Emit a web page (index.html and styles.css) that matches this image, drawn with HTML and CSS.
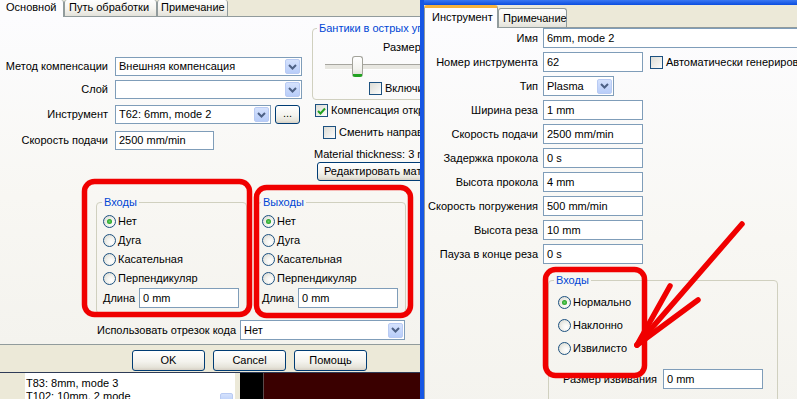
FILE: index.html
```html
<!DOCTYPE html>
<html lang="ru">
<head>
<meta charset="utf-8">
<title>Параметры</title>
<link rel="stylesheet" href="styles.css">
</head>
<body>
<div class="desk">
  <div class="win win-l">
    <div class="dlg">
      <div class="tabs tabs-l">
        <div class="tab tab-sel tl1">Основной</div>
        <div class="tab tl2">Путь обработки</div>
        <div class="tab tl3">Примечание</div>
      </div>
      <div class="panel panel-l">
        <div class="top">
          <div class="form">
            <div class="frow">
              <span class="lbl">Метод компенсации</span>
              <div class="combo w187"><span class="val">Внешняя компенсация</span><span class="dd"><svg width="9" height="6" viewBox="0 0 9 6"><path d="M1 1 L4.5 4.5 L8 1" fill="none" stroke="#4d6185" stroke-width="2"/></svg></span></div>
            </div>
            <div class="frow fr2">
              <span class="lbl">Слой</span>
              <div class="combo w187"><span class="val"></span><span class="dd"><svg width="9" height="6" viewBox="0 0 9 6"><path d="M1 1 L4.5 4.5 L8 1" fill="none" stroke="#4d6185" stroke-width="2"/></svg></span></div>
            </div>
            <div class="frow fr3">
              <span class="lbl">Инструмент</span>
              <div class="combo w156"><span class="val">T62: 6mm, mode 2</span><span class="dd"><svg width="9" height="6" viewBox="0 0 9 6"><path d="M1 1 L4.5 4.5 L8 1" fill="none" stroke="#4d6185" stroke-width="2"/></svg></span></div>
              <div class="btn btn-dots">...</div>
            </div>
            <div class="frow fr4">
              <span class="lbl">Скорость подачи</span>
              <div class="inp w99">2500 mm/min</div>
            </div>
          </div>
          <div class="side">
            <fieldset class="gb gb-bow">
              <legend>Бантики в острых углах</legend>
              <div class="razmer">Размер</div>
              <div class="slider"><div class="thumb"></div></div>
              <div class="ckrow ck-in"><span class="ck"></span>Включить</div>
            </fieldset>
            <div class="ckrow ck1"><span class="ck on"><svg width="9" height="8" viewBox="0 0 9 8"><path d="M1 4 L3.5 6.5 L8 1.5" fill="none" stroke="#21a121" stroke-width="2"/></svg></span>Компенсация открытых контуров</div>
            <div class="ckrow ck2"><span class="ck"></span>Сменить направление</div>
            <div class="mat">Material thickness: 3 mm</div>
            <div class="btn btn-mat">Редактировать материал</div>
          </div>
        </div>
        <div class="groups">
          <fieldset class="gb g1">
            <legend>Входы</legend>
            <div class="radrow r-first"><span class="radio on"></span>Нет</div>
            <div class="radrow"><span class="radio"></span>Дуга</div>
            <div class="radrow"><span class="radio"></span>Касательная</div>
            <div class="radrow"><span class="radio"></span>Перпендикуляр</div>
            <div class="lenrow"><span class="lenlbl">Длина</span><div class="inp w100">0 mm</div></div>
          </fieldset>
          <fieldset class="gb g2">
            <legend>Выходы</legend>
            <div class="radrow r-first"><span class="radio on"></span>Нет</div>
            <div class="radrow"><span class="radio"></span>Дуга</div>
            <div class="radrow"><span class="radio"></span>Касательная</div>
            <div class="radrow"><span class="radio"></span>Перпендикуляр</div>
            <div class="lenrow"><span class="lenlbl">Длина</span><div class="inp w100">0 mm</div></div>
          </fieldset>
        </div>
        <div class="userow">
          <span class="uselbl">Использовать отрезок кода</span>
          <div class="combo w165"><span class="val">Нет</span><span class="dd"><svg width="9" height="6" viewBox="0 0 9 6"><path d="M1 1 L4.5 4.5 L8 1" fill="none" stroke="#4d6185" stroke-width="2"/></svg></span></div>
        </div>
      </div>
      <div class="btnbar">
        <div class="btn btn-w">OK</div>
        <div class="btn btn-w">Cancel</div>
        <div class="btn btn-w">Помощь</div>
      </div>
    </div>
    <div class="app">
      <div class="app-side"></div>
      <div class="list">
        <div class="list-items">
          <div>T83: 8mm, mode 3</div>
          <div>T102: 10mm, 2 mode</div>
        </div>
        <div class="list-scroll"><span class="sbtn"></span></div>
      </div>
      <div class="app-gap"></div>
      <div class="app-black"></div>
      <div class="app-dark"></div>
    </div>
  </div>

  <div class="win win-r">
    <div class="title"></div>
    <div class="tabs tabs-r">
      <div class="tab tab-sel tr1">Инструмент</div>
      <div class="tab tr2">Примечание</div>
    </div>
    <div class="panel panel-r">
      <div class="fgrid">
        <span class="glbl">Имя</span><div class="inp wname">6mm, mode 2</div>
        <span class="glbl">Номер инструмента</span>
        <div class="cell-flex"><div class="inp w100">62</div><div class="ckrow ck-auto"><span class="ck"></span>Автоматически генерировать</div></div>
        <span class="glbl">Тип</span>
        <div class="combo w71"><span class="val">Plasma</span><span class="dd"><svg width="9" height="6" viewBox="0 0 9 6"><path d="M1 1 L4.5 4.5 L8 1" fill="none" stroke="#4d6185" stroke-width="2"/></svg></span></div>
        <span class="glbl">Ширина реза</span><div class="inp w100">1 mm</div>
        <span class="glbl">Скорость подачи</span><div class="inp w100">2500 mm/min</div>
        <span class="glbl">Задержка прокола</span><div class="inp w100">0 s</div>
        <span class="glbl">Высота прокола</span><div class="inp w100">4 mm</div>
        <span class="glbl">Скорость погружения</span><div class="inp w100">500 mm/min</div>
        <span class="glbl">Высота реза</span><div class="inp w100">10 mm</div>
        <span class="glbl">Пауза в конце реза</span><div class="inp w100">0 s</div>
      </div>
      <fieldset class="gb gb-r">
        <legend>Входы</legend>
        <div class="radrow2 r2-first"><span class="radio on"></span>Нормально</div>
        <div class="radrow2"><span class="radio"></span>Наклонно</div>
        <div class="radrow2"><span class="radio"></span>Извилисто</div>
        <div class="wavrow"><span class="wavlbl">Размер извивания</span><div class="inp w100">0 mm</div></div>
      </fieldset>
    </div>
  </div>

  <svg class="marks" width="797" height="399" viewBox="0 0 797 399">
    <g fill="none" stroke="#f00000" stroke-width="5.5" stroke-linecap="round" stroke-linejoin="round">
      <rect x="84.5" y="181.5" width="165" height="133" rx="10"/>
      <rect x="256.5" y="187.5" width="154" height="128" rx="10"/>
      <rect x="545.5" y="269.5" width="99" height="106" rx="10"/>
      <path d="M742 224 L637 345"/>
      <path d="M670 286 L637 345"/>
      <path d="M698 300 L637 345"/>
    </g>
  </svg>
</div>
</body>
</html>
```

FILE: styles.css
```css
* { box-sizing: border-box; }
html, body { margin: 0; padding: 0; }
body {
  font-family: "Liberation Sans", Arial, sans-serif;
  font-size: 11px;
  line-height: 13px;
  color: #000;
  background: #ece9d8;
}
.desk { position: relative; width: 797px; height: 399px; overflow: hidden; background: #ece9d8; }
.win { position: absolute; top: 0; overflow: hidden; }

/* ---------- left window ---------- */
.win-l { left: 0; width: 420px; height: 399px; display: flex; flex-direction: column; }
.dlg { height: 372px; flex: none; display: flex; flex-direction: column; background: #ece9d8; }

.tabs { display: flex; align-items: flex-end; flex: none; }
.tabs-l { height: 16px; }
.tab {
  border: 1px solid #919b9c; border-bottom: none;
  border-radius: 3px 3px 0 0;
  background: linear-gradient(#fefefe, #f5f4ef 55%, #e3e2da);
  white-space: nowrap;
}
.tab-sel { background: #fcfcfe; position: relative; z-index: 1; margin-bottom: -1px; }
.tl1 { width: 64px; height: 17px; padding: 1px 0 0 6px; border-top: none; border-left: none; border-radius: 0 3px 0 0; }
.tl2 { width: 93px; height: 16px; padding: 1px 0 0 4px; border-top: none; }
.tl3 { width: 71px; height: 16px; padding: 1px 0 0 3px; border-top: none; }

.panel { border: 1px solid #919b9c; background: linear-gradient(#fcfcfe, #f8f7f3 55%, #f4f3ee); }
.panel-l { height: 329px; flex: none; border-left: none; border-right: none; display: flex; flex-direction: column; }

.top { display: flex; height: 179px; flex: none; }
.form { width: 305px; flex: none; padding-top: 40px; }
.frow { display: flex; align-items: center; height: 19px; }
.fr2 { margin-top: 4px; }
.fr3 { margin-top: 6px; }
.fr4 { margin-top: 7px; height: 19px; }
.lbl { width: 108px; flex: none; text-align: right; margin-right: 7px; white-space: nowrap; }

.combo {
  height: 19px; border: 1px solid #7f9db9; background: #fff;
  display: flex; align-items: center; padding-left: 3px; flex: none;
}
.combo .val { flex: 1; white-space: nowrap; overflow: hidden; }
.dd {
  width: 15px; height: 15px; margin-right: 1px; flex: none;
  border: 1px solid #b9cbf3; border-radius: 2px;
  background: linear-gradient(#d5e2fd, #b8cdf9);
  display: flex; align-items: center; justify-content: center;
}
.w187 { width: 187px; }
.w156 { width: 156px; }
.w165 { width: 165px; height: 20px; }
.w71 { width: 71px; height: 20px; }

.inp {
  height: 19px; border: 1px solid #7f9db9; background: #fff;
  display: flex; align-items: center; padding-left: 3px; flex: none; white-space: nowrap;
}
.w99 { width: 99px; }
.w100 { width: 100px; height: 20px; }
.wname { width: 260px; height: 20px; }

.btn {
  border: 1px solid #003c74; border-radius: 3px;
  background: linear-gradient(#ffffff, #f4f3ee 55%, #e6e4da 85%, #d6d0c5);
  display: flex; align-items: center; justify-content: center; white-space: nowrap; flex: none;
}
.btn-dots { width: 25px; height: 19px; margin-left: 4px; padding-bottom: 2px; }

.side { flex: 1; min-width: 0; padding-left: 7px; white-space: nowrap; overflow: hidden; }
.gb { margin: 0; padding: 0; border: 1px solid #d0d0bf; border-radius: 4px; min-width: 0; }
.gb legend { padding: 0 2px; margin-left: 4px; color: #0046d5; line-height: 12px; }
.gb-bow { margin-top: 5px; height: 78px; width: 140px; }
.razmer { padding-left: 70px; margin-top: 7px; }
.slider { position: relative; height: 21px; margin-top: 2px; }
.slider::before {
  content: ""; position: absolute; left: 12px; right: 0; top: 8px; height: 4px;
  border-top: 1px solid #a7a6a0; border-bottom: 1px solid #fff; background: #e8e7e1;
}
.thumb {
  position: relative; margin-left: 39px; width: 11px; height: 21px;
  border: 1px solid #a3a39a; border-radius: 3px;
  background: linear-gradient(#fff, #f3f3ef 70%, #e2e1da);
  border-bottom: 3px solid #21a121;
}
.ckrow { display: flex; align-items: center; height: 13px; white-space: nowrap; }
.ck {
  width: 13px; height: 13px; flex: none; margin-right: 3px;
  border: 1px solid #1c5180;
  background: linear-gradient(135deg, #dcdcd5, #fcfcfb);
  display: flex; align-items: center; justify-content: center;
}
.ck-in { margin-top: 5px; margin-left: 56px; }
.ck1 { margin-top: 4px; margin-left: 3px; }
.ck2 { margin-top: 9px; margin-left: 11px; }
.mat { margin-top: 9px; margin-left: 2px; }
.btn-mat { width: 130px; height: 19px; margin-top: 1px; margin-left: 5px; justify-content: flex-start; padding-left: 6px; }

.groups { display: flex; padding-left: 96px; height: 118px; flex: none; }
.g1 { width: 151px; height: 118px; padding-left: 6px; }
.g1 legend { margin-left: -1px; }
.g2 { width: 149px; height: 118px; margin-left: 10px; padding-left: 4px; }
.g2 legend { margin-left: -1px; }
.radrow { display: flex; align-items: center; height: 19px; white-space: nowrap; }
.r-first { margin-top: 4px; }
.radio {
  width: 13px; height: 13px; flex: none; margin-right: 2px; border-radius: 50%;
  border: 1px solid #1c5180;
  background: radial-gradient(circle at 65% 65%, #fff 0, #f2f2ee 40%, #d4d4cb 100%);
  display: flex; align-items: center; justify-content: center;
}
.radio.on::after {
  content: ""; width: 5px; height: 5px; border-radius: 50%;
  background: radial-gradient(circle, #6bd36b 0, #21a121 70%);
}
.lenrow { display: flex; align-items: center; height: 20px; }
.lenlbl { width: 36px; flex: none; }

.userow { display: flex; align-items: center; height: 20px; margin-top: 6px; }
.uselbl { width: 236px; flex: none; text-align: right; margin-right: 4px; white-space: nowrap; }

.btnbar { flex: 1; display: flex; align-items: flex-start; gap: 8px; padding: 5px 0 0 132px; }
.btn-w { width: 73px; height: 21px; }

.app { flex: 1; display: flex; border-top: 1px solid #2e3b57; }
.app-side { width: 25px; flex: none; background: #ece9d8; }
.list { width: 210px; flex: none; background: #fff; display: flex; }
.list-items { flex: 1; padding: 4px 0 0 1px; white-space: nowrap; }
.list-scroll { width: 15px; flex: none; padding-top: 20px; }
.sbtn { display: block; width: 13px; height: 10px; border-radius: 2px; background: linear-gradient(#d5e2fd, #b8cdf9); border: 1px solid #b9cbf3; }
.app-gap { width: 5px; flex: none; background: #ece9d8; }
.app-black { width: 23px; flex: none; background: #000; }
.app-dark { flex: 1; background: #3a0000; border-left: 1px solid #5a4a4a; }

/* ---------- right window ---------- */
.win-r {
  left: 420px; width: 377px; height: 399px;
  border-left: 4px solid #1656e4;
  display: flex; flex-direction: column; background: #ece9d8;
}
.title { height: 5px; flex: none; background: linear-gradient(#3a78f2, #0b4ddf); }
.tabs-r { height: 22px; }
.tr1 {
  width: 74px; height: 23px; padding: 3px 0 0 7px;
  border-top: 3px solid #f5b13c; border-radius: 3px 3px 0 0;
}
.tr2 { width: 69px; height: 19px; padding: 3px 0 0 4px; }
.panel-r { flex: 1; border-right: none; border-bottom: none; }

.fgrid {
  display: grid; grid-template-columns: 113px auto; column-gap: 5px; row-gap: 4px;
  grid-auto-rows: 20px; align-items: center; justify-items: start;
}
.glbl { justify-self: end; white-space: nowrap; }
.cell-flex { display: flex; align-items: center; }
.ck-auto { margin-left: 7px; }

.gb-r { margin-top: 10px; margin-left: 123px; width: 230px; height: 140px; padding-left: 9px; }
.gb-r legend { margin-left: -4px; }
.radrow2 { display: flex; align-items: center; height: 19px; margin-top: 4px; white-space: nowrap; }
.r2-first { margin-top: 7px; }
.wavrow { display: flex; align-items: center; height: 20px; margin-top: 11px; margin-left: 5px; }
.wavlbl { width: 100px; flex: none; white-space: nowrap; }

.marks { position: absolute; left: 0; top: 0; pointer-events: none; }
```
